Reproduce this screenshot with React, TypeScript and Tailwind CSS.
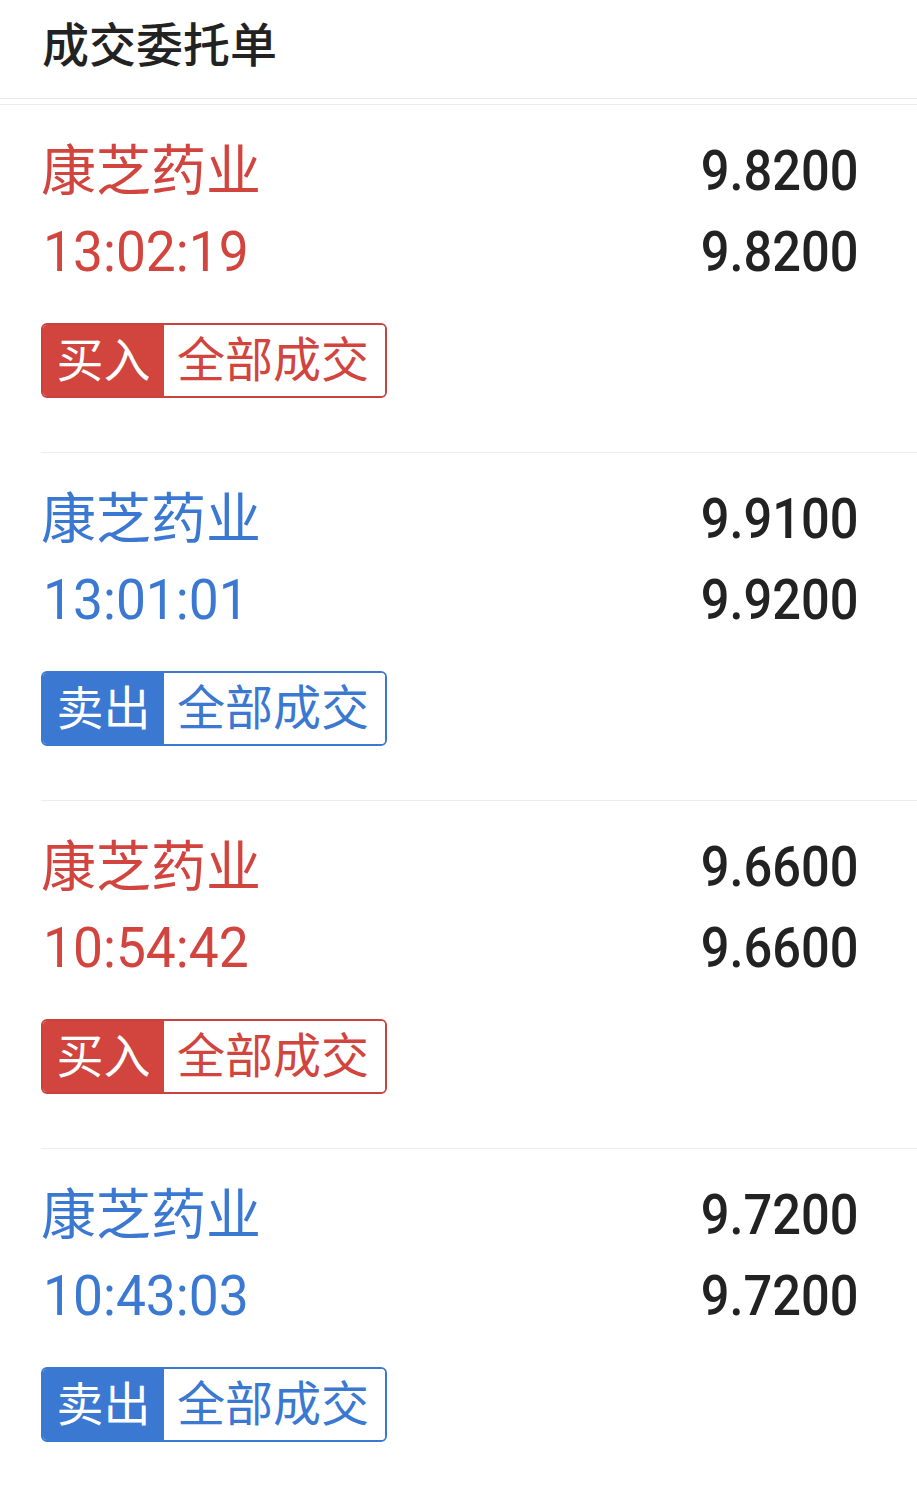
import React from "react";

type Item = {
  name: string;
  time: string;
  p1: string;
  p2: string;
  side: "buy" | "sell";
};

const items: Item[] = [
  { name: "康芝药业", time: "13:02:19", p1: "9.8200", p2: "9.8200", side: "buy" },
  { name: "康芝药业", time: "13:01:01", p1: "9.9100", p2: "9.9200", side: "sell" },
  { name: "康芝药业", time: "10:54:42", p1: "9.6600", p2: "9.6600", side: "buy" },
  { name: "康芝药业", time: "10:43:03", p1: "9.7200", p2: "9.7200", side: "sell" },
];

const font = { fontFamily: 'Roboto, "Noto Sans CJK SC", sans-serif' };

function Row({ it }: { it: Item }) {
  const buy = it.side === "buy";
  const text = buy ? "text-[#d2443e]" : "text-[#3a78d2]";
  const bg = buy ? "bg-[#d2443e]" : "bg-[#3a78d2]";
  const border = buy ? "border-[#c9423d]" : "border-[#3a78d2]";
  return (
    <div className="ml-[41px] h-[348px] border-b border-[#ececec] pt-[26px]">
      <div className="flex justify-between pr-[58px]">
        <div className={`flex flex-col ${text}`}>
          <div className="h-[81px] flex items-center text-[55px] leading-none">{it.name}</div>
          <div className="h-[81px] flex items-center pl-[2px]">
            <span className="inline-block origin-left scale-x-[0.97] text-[55px] leading-none">{it.time}</span>
          </div>
        </div>
        <div className="flex flex-col items-end text-[#222]">
          <div className="h-[81px] flex items-center">
            <span className="inline-block origin-right scale-x-[0.92] text-[55px] font-medium leading-none">{it.p1}</span>
          </div>
          <div className="h-[81px] flex items-center">
            <span className="inline-block origin-right scale-x-[0.92] text-[55px] font-medium leading-none">{it.p2}</span>
          </div>
        </div>
      </div>
      <div className={`mt-[30px] flex h-[75px] w-[346px] overflow-hidden rounded-[6px] border-2 ${border}`}>
        <div className={`flex w-[121px] items-center justify-center ${bg} text-white text-[47px] leading-none`}>
          {buy ? "买入" : "卖出"}
        </div>
        <div className={`flex flex-1 items-center pl-[13px] bg-white ${text} text-[48px] leading-none`}>全部成交</div>
      </div>
    </div>
  );
}

export default function App() {
  return (
    <div className="w-[917px] min-h-[1491px] bg-white" style={font}>
      <div className="h-[99px] flex items-center px-[42px] pb-[8px] border-b border-[#e8e8e8]">
        <div className="text-[47px] font-medium text-[#222] leading-none">成交委托单</div>
      </div>
      <div className="h-[6px] border-b border-[#ececec]" />
      {items.map((it, i) => (
        <Row key={i} it={it} />
      ))}
    </div>
  );
}
